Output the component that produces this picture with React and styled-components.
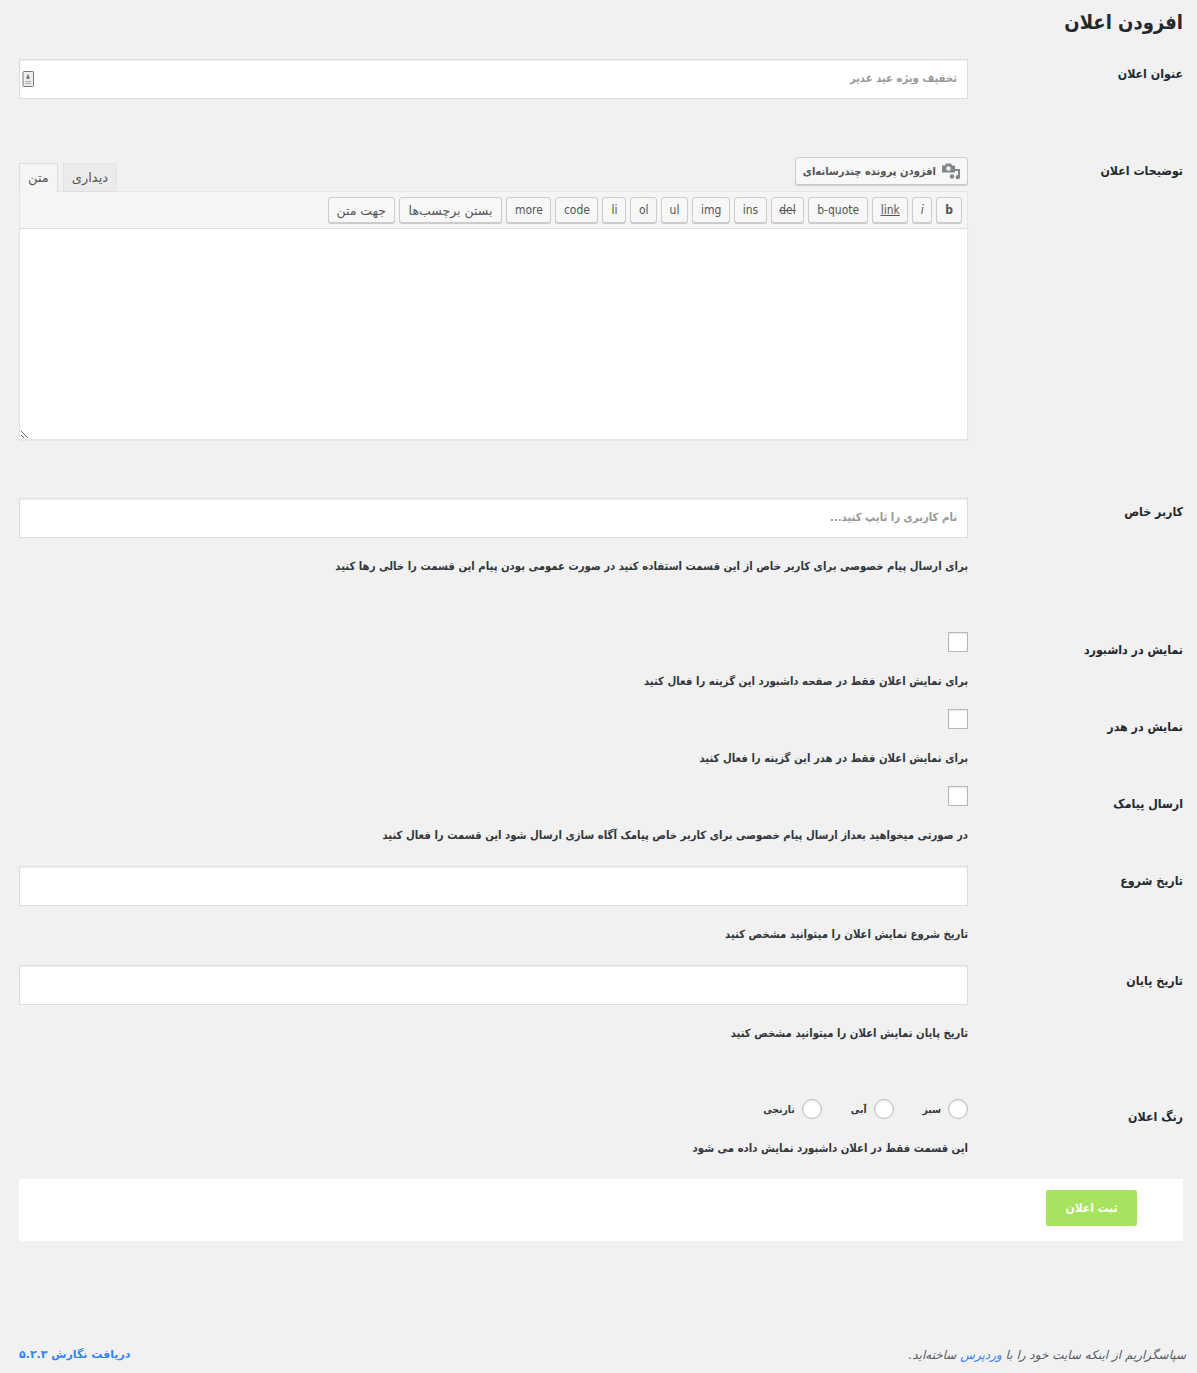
import React from 'react'
import styled, { createGlobalStyle } from 'styled-components'

const FONT = `'DejaVu Sans Condensed', 'DejaVu Sans', sans-serif`
const WIDE_FONT = `'DejaVu Sans', sans-serif`

const GlobalStyle = createGlobalStyle`
  html, body {
    margin: 0;
    padding: 0;
    background: #f1f1f1;
  }
  body {
    font-family: ${FONT};
    font-size: 13px;
    color: #444;
  }
`

const Page = styled.div`
  width: 1197px;
  height: 1373px;
  box-sizing: border-box;
  padding: 0 14px 0 19px;
  overflow: hidden;
`

const Title = styled.h1`
  margin: 0;
  height: 59px;
  padding-top: 8px;
  box-sizing: border-box;
  font-size: 20px;
  line-height: 28px;
  font-weight: 700;
  color: #23282d;
`

const Row = styled.div`
  display: grid;
  grid-template-columns: 215px 949px;
  margin-top: ${({ $top }) => $top || 0}px;
`

const Label = styled.label`
  display: block;
  padding-top: ${({ $top }) => $top}px;
  font-size: 12.3px;
  line-height: 18px;
  font-weight: 700;
  color: #23282d;
`

const Field = styled.div`
  position: relative;
  min-width: 0;
`

const TextInput = styled.input`
  display: block;
  width: 100%;
  height: 40px;
  box-sizing: border-box;
  padding: 0 10px 2px;
  border: 1px solid #ddd;
  background: #fff;
  box-shadow: inset 0 1px 2px rgba(0, 0, 0, 0.07);
  font-family: ${FONT};
  font-size: 11.25px;
  font-weight: 700;
  outline: none;

  &::placeholder {
    color: #999;
    opacity: 1;
  }
`

const KeyIcon = styled.svg`
  position: absolute;
  left: 3px;
  top: 12px;
`

const Hint = styled.p`
  margin: ${({ $top }) => $top || 20}px 0 0;
  font-size: 11.25px;
  line-height: 18px;
  font-weight: 700;
  color: #32373c;
`

const EditorHead = styled.div`
  display: flex;
  justify-content: space-between;
  align-items: flex-end;
  height: 34px;
`

const MediaButton = styled.button`
  display: flex;
  align-items: center;
  gap: 6px;
  height: 28px;
  margin-bottom: 6px;
  padding: 0 7px;
  box-sizing: border-box;
  border: 1px solid #ccc;
  border-radius: 3px;
  background: #f7f7f7;
  box-shadow: 0 1px 0 #ccc;
  font-family: ${FONT};
  font-size: 11.1px;
  font-weight: 700;
  color: #555;
`

const Tabs = styled.div`
  display: flex;
  gap: 5px;
  align-items: flex-end;
  margin-bottom: -1px;
`

const Tab = styled.div`
  height: 29px;
  padding: 0 8px;
  box-sizing: border-box;
  border: 1px solid ${({ $active }) => ($active ? '#ddd' : '#e5e5e5')};
  border-bottom-color: ${({ $active }) => ($active ? '#f5f5f5' : '#ddd')};
  background: ${({ $active }) => ($active ? '#f5f5f5' : '#ebebeb')};
  font-family: ${WIDE_FONT};
  font-size: 13px;
  line-height: 28px;
  color: #555;
`

const Toolbar = styled.div`
  display: flex;
  gap: 4px;
  height: 38px;
  padding: 5px 5px 0;
  box-sizing: border-box;
  border: 1px solid #e5e5e5;
  border-bottom-color: #ddd;
  background: #f5f5f5;
`

const ToolButton = styled.button`
  height: 26px;
  padding: 0 ${({ $pad }) => $pad || 7.5}px;
  box-sizing: border-box;
  border: 1px solid #ccc;
  border-radius: 3px;
  background: #f7f7f7;
  box-shadow: 0 1px 0 #ccc;
  font-family: ${({ $wide }) => ($wide ? WIDE_FONT : FONT)};
  font-size: ${({ $wide }) => ($wide ? 12.5 : 12)}px;
  color: #555;
  font-weight: ${({ $bold }) => ($bold ? 700 : 400)};
  font-style: ${({ $italic }) => ($italic ? 'italic' : 'normal')};
  text-decoration: ${({ $line }) => $line || 'none'};
`

const Editor = styled.textarea`
  display: block;
  width: 100%;
  height: 211px;
  box-sizing: border-box;
  padding: 10px;
  border: 1px solid #e5e5e5;
  border-top: 0;
  background: #fff;
  box-shadow: 0 1px 1px rgba(0, 0, 0, 0.04);
  resize: vertical;
  outline: none;
`

const Check = styled.input`
  display: block;
  appearance: none;
  width: 20px;
  height: 20px;
  margin: 0;
  box-sizing: border-box;
  border: 1px solid #b4b9be;
  background: #fff;
  box-shadow: inset 0 1px 2px rgba(0, 0, 0, 0.1);
`

const RadioGroup = styled.div`
  display: flex;
  gap: 29px;
  height: 20px;
`

const RadioItem = styled.label`
  display: flex;
  align-items: center;
  gap: 7px;
  font-size: 10.2px;
  font-weight: 700;
  color: #32373c;
`

const Radio = styled(Check)`
  border-radius: 50%;
`

const SubmitPanel = styled.div`
  margin-top: 21px;
  height: 62px;
  padding: 11px 46px 0;
  box-sizing: border-box;
  background: #fff;
  border-radius: 2px;
`

const SubmitButton = styled.button`
  display: block;
  width: 91px;
  height: 36px;
  border: 0;
  border-radius: 2px;
  background: #a6e35e;
  color: #fff;
  font-family: ${FONT};
  font-size: 12px;
  font-weight: 700;
`

const Footer = styled.div`
  display: flex;
  justify-content: space-between;
  margin: 104px -3px 0 0;
  line-height: 20px;
  font-family: ${WIDE_FONT};
  font-size: 12px;
`

const Thanks = styled.span`
  font-style: italic;
  color: #555d66;
`

const FooterLink = styled.a`
  color: #3582f5;
  text-decoration: none;
  font-size: ${({ $bold }) => ($bold ? 11 : 12)}px;
  font-weight: ${({ $bold }) => ($bold ? 700 : 400)};
`

const toolButtons = [
  { text: 'b', $bold: true, $pad: 8 },
  { text: 'i', $italic: true },
  { text: 'link', $line: 'underline' },
  { text: 'b-quote', $pad: 8 },
  { text: 'del', $line: 'line-through' },
  { text: 'ins' },
  { text: 'img', $pad: 8 },
  { text: 'ul' },
  { text: 'ol' },
  { text: 'li', $pad: 8 },
  { text: 'code' },
  { text: 'more' },
  { text: 'بستن برچسب‌ها', $wide: true, $pad: 9 },
  { text: 'جهت متن', $wide: true },
]

const MediaIcon = () => (
  <svg width="18" height="16" viewBox="0 0 18 16" fill="#82878c">
    <path d="M0 2.5h3L4 .5h5l1 2h3v7H0z" />
    <circle cx="6.5" cy="5.5" r="2.2" fill="#f7f7f7" />
    <path d="M13 6h5v8.2a2.2 2.2 0 1 1-2-2.2V8h-3z" />
    <circle cx="10" cy="13.5" r="2.2" />
  </svg>
)

export default function App() {
  return (
    <Page dir="rtl">
      <GlobalStyle />
      <Title>افزودن اعلان</Title>

      <Row>
        <Label $top={6}>عنوان اعلان</Label>
        <Field>
          <TextInput placeholder="تخفیف ویژه عید غدیر" />
          <KeyIcon width="12" height="16" viewBox="0 0 12 16">
            <rect x="1" y="0.5" width="10.5" height="15" rx="1" fill="#eee" stroke="#777" />
            <path d="M6.2 3l1.3 3v2h-3V6z" fill="#777" />
            <path d="M3.2 10h6v1h-6zM3.2 12h6v1h-6z" fill="#aaa" />
          </KeyIcon>
        </Field>
      </Row>

      <Row $top={58}>
        <Label $top={5}>توضیحات اعلان</Label>
        <Field>
          <EditorHead>
            <MediaButton>
              <MediaIcon />
              افزودن پرونده چندرسانه‌ای
            </MediaButton>
            <Tabs>
              <Tab>دیداری</Tab>
              <Tab $active>متن</Tab>
            </Tabs>
          </EditorHead>
          <Toolbar>
            {toolButtons.map(({ text, ...rest }) => (
              <ToolButton key={text} {...rest}>
                {text}
              </ToolButton>
            ))}
          </Toolbar>
          <Editor />
        </Field>
      </Row>

      <Row $top={58}>
        <Label $top={5}>کاربر خاص</Label>
        <Field>
          <TextInput placeholder="نام کاربری را تایپ کنید..." />
          <Hint>برای ارسال پیام خصوصی برای کاربر خاص از این قسمت استفاده کنید در صورت عمومی بودن پیام این قسمت را خالی رها کنید</Hint>
        </Field>
      </Row>

      <Row $top={56}>
        <Label $top={9}>نمایش در داشبورد</Label>
        <Field>
          <Check type="checkbox" />
          <Hint $top={21}>برای نمایش اعلان فقط در صفحه داشبورد این گزینه را فعال کنید</Hint>
        </Field>
      </Row>

      <Row $top={18}>
        <Label $top={9}>نمایش در هدر</Label>
        <Field>
          <Check type="checkbox" />
          <Hint $top={21}>برای نمایش اعلان فقط در هدر این گزینه را فعال کنید</Hint>
        </Field>
      </Row>

      <Row $top={18}>
        <Label $top={9}>ارسال پیامک</Label>
        <Field>
          <Check type="checkbox" />
          <Hint $top={21}>در صورتی میخواهید بعداز ارسال پیام خصوصی برای کاربر خاص پیامک آگاه سازی ارسال شود این قسمت را فعال کنید</Hint>
        </Field>
      </Row>

      <Row $top={21}>
        <Label $top={6}>تاریخ شروع</Label>
        <Field>
          <TextInput />
          <Hint>تاریخ شروع نمایش اعلان را میتوانید مشخص کنید</Hint>
        </Field>
      </Row>

      <Row $top={21}>
        <Label $top={7}>تاریخ پایان</Label>
        <Field>
          <TextInput />
          <Hint>تاریخ پایان نمایش اعلان را میتوانید مشخص کنید</Hint>
        </Field>
      </Row>

      <Row $top={56}>
        <Label $top={9}>رنگ اعلان</Label>
        <Field>
          <RadioGroup>
            <RadioItem><Radio type="radio" name="color" />سبز</RadioItem>
            <RadioItem><Radio type="radio" name="color" />آبی</RadioItem>
            <RadioItem><Radio type="radio" name="color" />نارنجی</RadioItem>
          </RadioGroup>
          <Hint $top={21}>این قسمت فقط در اعلان داشبورد نمایش داده می شود</Hint>
        </Field>
      </Row>

      <SubmitPanel>
        <SubmitButton>ثبت اعلان</SubmitButton>
      </SubmitPanel>

      <Footer>
        <Thanks>
          سپاسگزاریم از اینکه سایت خود را با <FooterLink href="#">وردپرس</FooterLink> ساخته‌اید.
        </Thanks>
        <FooterLink href="#" $bold>دریافت نگارش ۵.۲.۳</FooterLink>
      </Footer>
    </Page>
  )
}
